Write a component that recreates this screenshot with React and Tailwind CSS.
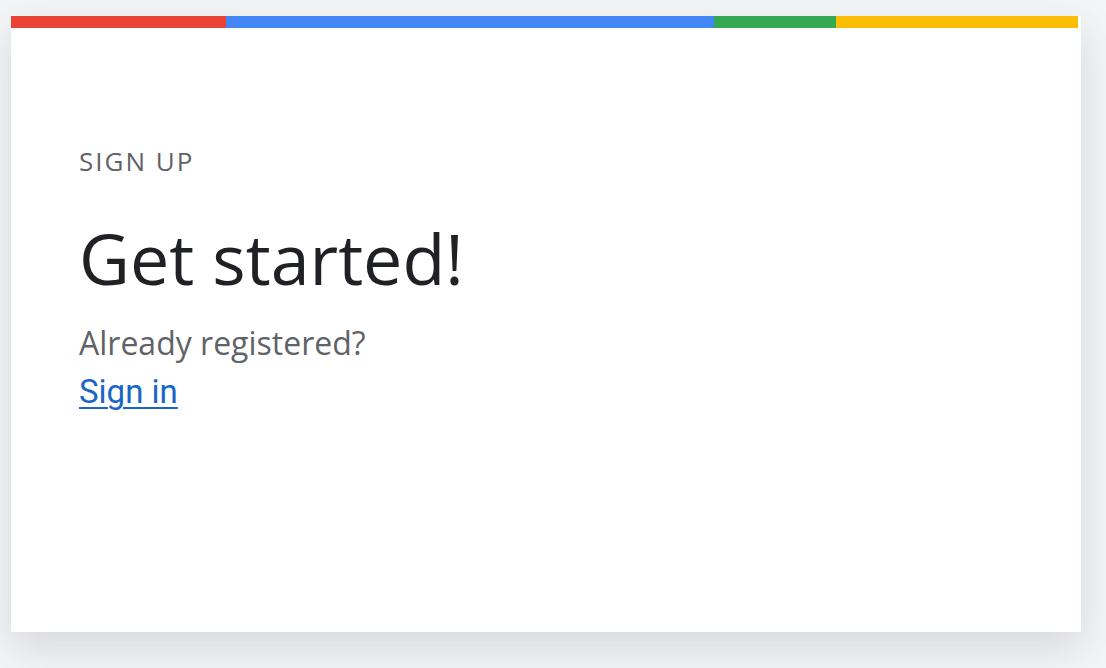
export default function App() {
  return (
    <div className="w-[1106px] h-[668px] bg-[#f4f5f7] pt-4 pl-[11px] overflow-hidden">
      <div className="w-[1070px] h-[616px] bg-white shadow-[0_16px_40px_rgba(60,64,67,0.16)] flex flex-col">
        <div className="flex h-3 w-[1067px]">
          <div className="w-[215px] bg-[#ea4335]" />
          <div className="w-[488px] bg-[#4285f4]" />
          <div className="w-[122px] bg-[#34a853]" />
          <div className="flex-1 bg-[#fbbc04]" />
        </div>
        <div className="pl-[68px] pt-[117px] flex flex-col">
          <div className="text-[26px] leading-[32px] tracking-[2px] text-[#5f6368] font-['Open_Sans',sans-serif]">SIGN UP</div>
          <h1 className="mt-[41px] text-[70px] leading-[80px] text-[#202124] font-['Open_Sans',sans-serif]">Get started!</h1>
          <p className="mt-[25px] text-[32px] leading-[40px] text-[#5f6368] font-['Open_Sans',sans-serif]">Already registered?</p>
          <a href="#" className="mt-[9px] self-start text-[33px] leading-[40px] text-[#1a66c8] underline underline-offset-[4px] decoration-[2px] font-['Roboto',sans-serif]">Sign in</a>
        </div>
      </div>
    </div>
  );
}
